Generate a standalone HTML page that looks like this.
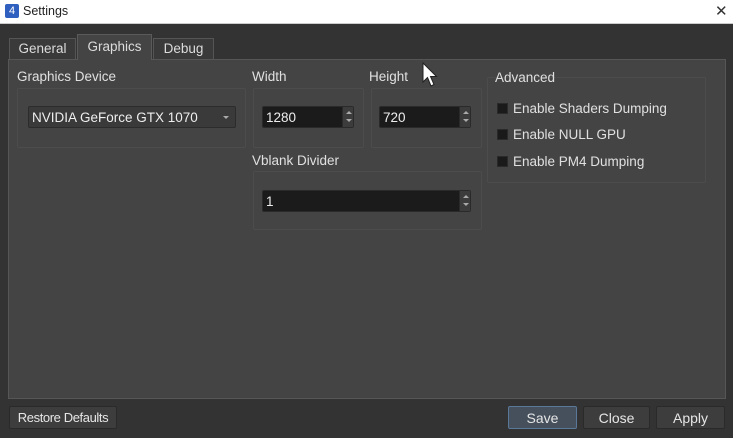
<!DOCTYPE html>
<html><head><meta charset="utf-8"><style>
*{box-sizing:border-box;margin:0;padding:0}
body{width:733px;height:438px;background:#333;font-family:"Liberation Sans",sans-serif;font-size:13px;color:#dcdcdc;position:relative;overflow:hidden}
.a{position:absolute}
.title{left:0;top:0;width:733px;height:24px;background:#fff;border-bottom:1px solid #ccc;color:#222;font-size:12.5px}
.tab{position:absolute;border:1px solid #555;border-bottom:none;background:#3a3a3a;text-align:center;color:#dcdcdc;font-size:13.5px}
.pane{left:8px;top:59px;width:718px;height:340px;background:#444;border:1px solid #565656}
.frame{position:absolute;border:1px solid #4c4c4c;border-radius:2px}
.lbl{position:absolute;font-size:13.5px;color:#e0e0e0}
.spin{position:absolute;height:22px;background:#1b1b1b;border:1px solid #2a2a2a;border-radius:2px;color:#eee;padding:3px 0 0 3px;font-size:13.5px}
.spin .ar{position:absolute;right:0;top:0;width:11px;height:20px;background:#3c3c3c;border-left:1px solid #2a2a2a}
.ar:before{content:"";position:absolute;left:3px;top:4px;border:3px solid transparent;border-bottom:3px solid #aaa;border-top:none}
.ar:after{content:"";position:absolute;left:3px;top:12px;border:3px solid transparent;border-top:3px solid #aaa;border-bottom:none}
.cb{position:absolute;width:11px;height:11px;background:#1a1a1a;border:1px solid #2a2a2a}
.btn{position:absolute;top:406px;height:23px;background:#3d3d3d;border:1px solid #2a2a2a;border-radius:2px;text-align:center;padding-top:3px;font-size:14px;color:#e6e6e6;white-space:nowrap}
</style></head><body>
<div class="a title">
 <div class="a" style="left:5px;top:4px;width:14px;height:14px;background:#2f5fbf;border-radius:2px;color:#fff;font-size:11px;text-align:center;line-height:14px">4</div>
 <div class="a" style="left:23px;top:4px">Settings</div>
 <div class="a" style="left:715px;top:2px;font-size:15px;color:#333">✕</div>
</div>
<div class="tab" style="left:9px;top:38px;width:67px;height:21px;padding-top:2px">General</div>
<div class="tab" style="left:153px;top:38px;width:61px;height:21px;padding-top:2px">Debug</div>
<div class="a pane"></div>
<div class="tab" style="left:77px;top:34px;width:75px;height:26px;background:#444;padding-top:4px;border-color:#5a5a5a">Graphics</div>

<div class="lbl" style="left:17px;top:69px">Graphics Device</div>
<div class="frame" style="left:17px;top:88px;width:229px;height:60px"></div>
<div class="a" style="left:28px;top:106px;width:208px;height:22px;background:#3a3a3a;border:1px solid #2c2c2c;border-radius:2px;padding:3px 0 0 3px;color:#eee;font-size:13.5px">NVIDIA GeForce GTX 1070
 <div class="a" style="right:6px;top:9px;border:3px solid transparent;border-top:3px solid #aaa;border-bottom:none"></div></div>

<div class="lbl" style="left:252px;top:69px">Width</div>
<div class="frame" style="left:253px;top:88px;width:111px;height:60px"></div>
<div class="spin" style="left:262px;top:106px;width:92px">1280<div class="ar"></div></div>

<div class="lbl" style="left:369px;top:69px">Height</div>
<div class="frame" style="left:371px;top:88px;width:111px;height:60px"></div>
<div class="spin" style="left:379px;top:106px;width:92px">720<div class="ar"></div></div>

<div class="lbl" style="left:252px;top:153px">Vblank Divider</div>
<div class="frame" style="left:253px;top:171px;width:229px;height:59px"></div>
<div class="spin" style="left:262px;top:190px;width:209px">1<div class="ar"></div></div>

<div class="frame" style="left:487px;top:77px;width:219px;height:106px"></div>
<div class="lbl" style="left:495px;top:70px">Advanced</div>
<div class="cb" style="left:497px;top:103px"></div><div class="lbl" style="left:513px;top:101px">Enable Shaders Dumping</div>
<div class="cb" style="left:497px;top:129px"></div><div class="lbl" style="left:513px;top:127px">Enable NULL GPU</div>
<div class="cb" style="left:497px;top:156px"></div><div class="lbl" style="left:513px;top:154px">Enable PM4 Dumping</div>

<svg class="a" style="left:422px;top:62px" width="18" height="28" viewBox="0 0 18 28"><path d="M1 1 L1 20 L5.5 15.5 L9 24 L12 22.5 L8.5 14.5 L14.5 14.5 Z" fill="#fff" stroke="#222" stroke-width="1"/></svg>

<div class="btn" style="left:9px;width:108px;font-size:13px;letter-spacing:-0.4px">Restore Defaults</div>
<div class="btn" style="left:508px;width:69px;background:#45505c;border-color:#5a7899">Save</div>
<div class="btn" style="left:583px;width:67px">Close</div>
<div class="btn" style="left:656px;width:69px">Apply</div>
</body></html>
